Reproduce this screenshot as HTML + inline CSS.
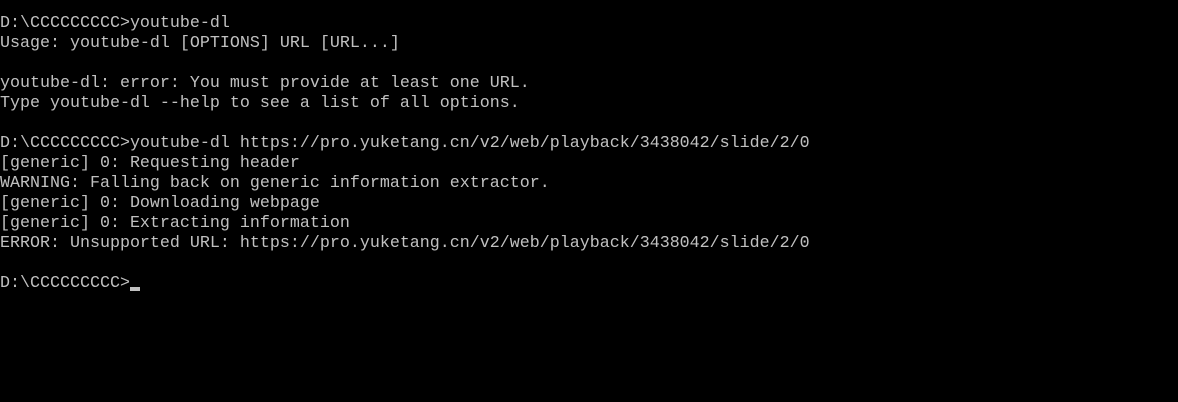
<!DOCTYPE html>
<html><head><style>
html,body{margin:0;padding:0;background:#000;width:1178px;height:402px;overflow:hidden}
pre{margin:0;position:absolute;left:0;top:14px;font-family:"Liberation Mono","Noto Sans CJK SC",monospace;font-size:16.67px;line-height:20px;color:#c0c0c0;letter-spacing:0}
.cur{display:inline-block;width:10px;height:4px;background:#c0c0c0;vertical-align:-4px}
</style></head><body>
<pre>D:\CCCCCCCCC&gt;youtube-dl
Usage: youtube-dl [OPTIONS] URL [URL...]

youtube-dl: error: You must provide at least one URL.
Type youtube-dl --help to see a list of all options.

D:\CCCCCCCCC&gt;youtube-dl https://pro.yuketang.cn/v2/web/playback/3438042/slide/2/0
[generic] 0: Requesting header
WARNING: Falling back on generic information extractor.
[generic] 0: Downloading webpage
[generic] 0: Extracting information
ERROR: Unsupported URL: https://pro.yuketang.cn/v2/web/playback/3438042/slide/2/0

D:\CCCCCCCCC&gt;<span class="cur"></span></pre>
</body></html>
